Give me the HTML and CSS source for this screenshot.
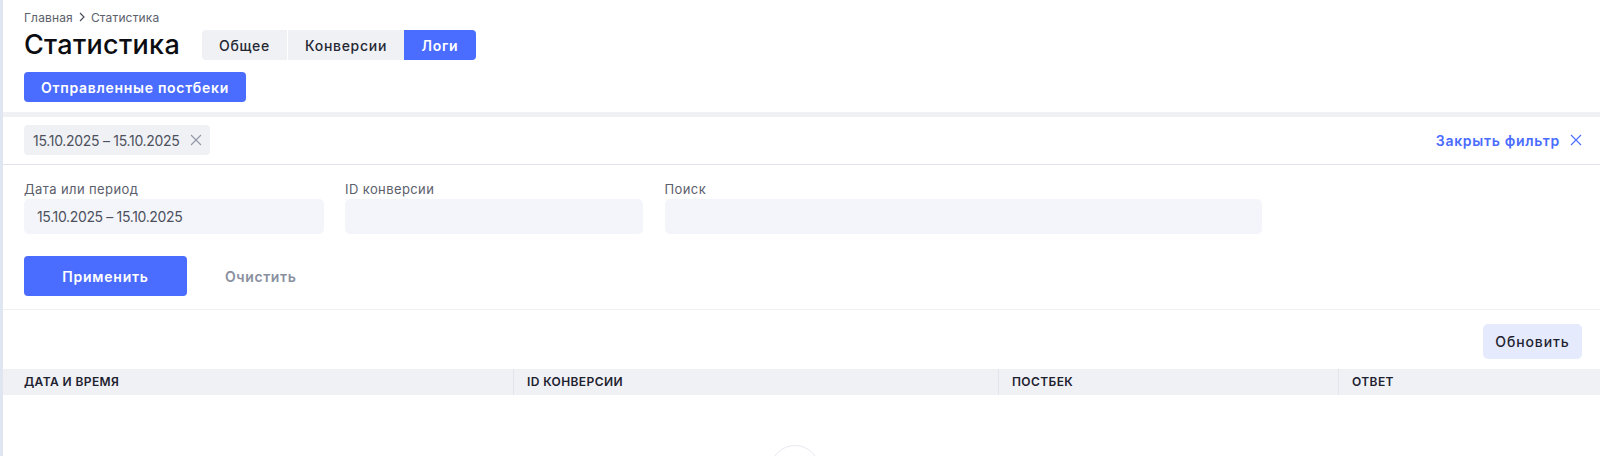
FILE: index.html
```html
<!DOCTYPE html>
<html lang="ru">
<head>
    <meta charset="UTF-8">
    <title>Статистика</title>
    <link rel="stylesheet" href="styles.css">
</head>
<body>
    <div class="page">
        <div class="page-head">
            <div class="breadcrumbs">
                <span>Главная</span>
                <svg class="crumb-arrow" width="6" height="10" viewBox="0 0 6 10"><path d="M1 1l4 4-4 4" fill="none" stroke="#4a4f5c" stroke-width="1.2"/></svg>
                <span>Статистика</span>
            </div>
            <div class="title-row">
                <h1 class="title">Статистика</h1>
                <div class="tabs">
                    <div class="tab">Общее</div>
                    <div class="tab">Конверсии</div>
                    <div class="tab active">Логи</div>
                </div>
            </div>
            <button class="sub-btn">Отправленные постбеки</button>
        </div>

        <div class="filter-bar">
            <div class="chip">
                <span>15.10.2025 – 15.10.2025</span>
                <svg width="12" height="12" viewBox="0 0 12 12"><path d="M1 1l10 10M11 1L1 11" stroke="#9298a6" stroke-width="1.1"/></svg>
            </div>
            <div class="filter-close">
                <span>Закрыть фильтр</span>
                <svg width="12" height="12" viewBox="0 0 12 12"><path d="M1 1l10 10M11 1L1 11" stroke="#4a6cff" stroke-width="1.1"/></svg>
            </div>
        </div>

        <div class="filter-form">
            <div class="fields">
                <div class="field field-date">
                    <label>Дата или период</label>
                    <div class="input">15.10.2025 – 15.10.2025</div>
                </div>
                <div class="field field-id">
                    <label>ID конверсии</label>
                    <div class="input"></div>
                </div>
                <div class="field field-search">
                    <label>Поиск</label>
                    <div class="input"></div>
                </div>
            </div>
            <div class="form-actions">
                <button class="apply-btn">Применить</button>
                <button class="clear-btn">Очистить</button>
            </div>
        </div>

        <div class="toolbar">
            <button class="refresh-btn">Обновить</button>
        </div>

        <div class="table-head">
            <div class="col col-date">ДАТА И ВРЕМЯ</div>
            <div class="col col-id">ID КОНВЕРСИИ</div>
            <div class="col col-postback">ПОСТБЕК</div>
            <div class="col col-answer">ОТВЕТ</div>
        </div>

        <div class="table-empty">
            <div class="empty-circle"></div>
        </div>
    </div>
</body>
</html>
```

FILE: styles.css
```css
* {
    margin: 0;
    padding: 0;
    box-sizing: border-box;
}

html, body {
    height: 456px;
    overflow: hidden;
}

body {
    font-family: Inter, 'Open Sans', sans-serif;
    background: #dfe6f1;
    color: #14161f;
}

.page {
    margin-left: 3px;
    height: 456px;
    background: white;
    overflow: hidden;
}

.page-head {
    height: 112px;
    padding: 10px 21px 0;
}

.breadcrumbs {
    display: flex;
    align-items: center;
    gap: 6px;
    height: 14px;
    font-size: 12px;
    letter-spacing: 0.15px;
    color: #5c606c;
}

.title-row {
    display: flex;
    align-items: center;
    height: 30px;
    margin-top: 6px;
}

.title {
    width: 178px;
    font-size: 27px;
    font-weight: 500;
    line-height: 30px;
    letter-spacing: 0.3px;
    color: #0c0d12;
}

.tabs {
    display: flex;
    height: 30px;
    gap: 1px;
}

.tab {
    display: flex;
    align-items: center;
    justify-content: center;
    width: 85px;
    background: #f0f1f5;
    font-size: 14px;
    font-weight: 500;
    letter-spacing: 0.7px;
    color: #252833;
}

.tab:first-child {
    border-radius: 4px 0 0 4px;
}

.tab:nth-child(2) {
    width: 116px;
}

.tab.active {
    width: 72px;
    margin-left: -1px;
    background: #4a6cff;
    color: white;
    font-weight: 600;
    border-radius: 0 4px 4px 0;
}

.sub-btn {
    display: block;
    width: 222px;
    height: 30px;
    margin-top: 12px;
    background: #4a6cff;
    border: none;
    border-radius: 4px;
    font-family: inherit;
    font-size: 14px;
    font-weight: 600;
    letter-spacing: 0.7px;
    color: white;
}

.filter-bar {
    display: flex;
    align-items: flex-start;
    justify-content: space-between;
    height: 53px;
    padding: 8px 21px 0;
    border-top: 5px solid #f0f1f5;
    border-bottom: 1px solid #e2e4ea;
}

.chip {
    display: flex;
    align-items: center;
    justify-content: space-between;
    width: 186px;
    height: 30px;
    padding: 0 8px 0 9px;
    background: #f0f1f5;
    border-radius: 4px;
    font-size: 14px;
    letter-spacing: -0.3px;
    color: #4d515d;
}

.filter-close {
    display: flex;
    align-items: center;
    gap: 10px;
    height: 30px;
    margin-right: -3px;
    font-size: 14px;
    font-weight: 600;
    letter-spacing: 0.7px;
    color: #4a6cff;
}

.filter-form {
    height: 145px;
    padding: 16px 21px 0;
    border-bottom: 1px solid #eff0f3;
}

.fields {
    display: flex;
    gap: 21.5px;
}

.field label {
    display: block;
    height: 18px;
    font-size: 13px;
    line-height: 16px;
    letter-spacing: 0.4px;
    color: #5c606c;
}

.field-date {
    width: 299.5px;
}

.field-id {
    width: 298px;
}

.field-search {
    width: 597px;
}

.input {
    height: 35px;
    padding: 0 13px;
    background: #f4f5fa;
    border-radius: 5px;
    font-size: 14px;
    line-height: 35px;
    letter-spacing: -0.35px;
    color: #4d515d;
}

.form-actions {
    display: flex;
    align-items: center;
    margin-top: 22px;
}

.apply-btn {
    width: 163px;
    height: 40px;
    background: #4a6cff;
    border: none;
    border-radius: 4px;
    font-family: inherit;
    font-size: 14px;
    font-weight: 600;
    letter-spacing: 0.75px;
    color: white;
}

.clear-btn {
    margin-left: 38px;
    background: none;
    border: none;
    font-family: inherit;
    font-size: 14px;
    font-weight: 600;
    letter-spacing: 0.6px;
    color: #8a8fa0;
}

.toolbar {
    display: flex;
    justify-content: flex-end;
    height: 59px;
    padding: 14px 18px 0 0;
}

.refresh-btn {
    width: 99px;
    height: 35px;
    background: #e5eafc;
    border: none;
    border-radius: 5px;
    font-family: inherit;
    font-size: 14px;
    font-weight: 500;
    letter-spacing: 0.9px;
    color: #1e2230;
}

.table-head {
    display: flex;
    height: 26px;
    background: #f0f1f5;
}

.col {
    padding-left: 21px;
    font-size: 12px;
    font-weight: 600;
    line-height: 26px;
    letter-spacing: 0.4px;
    color: #1e2230;
}

.col + .col {
    padding-left: 13px;
    border-left: 1px solid #e2e4ee;
}

.col-date {
    width: 510px;
}

.col-id {
    width: 485px;
}

.col-postback {
    width: 340px;
}

.col-answer {
    flex: 1;
}

.table-empty {
    display: flex;
    justify-content: center;
    padding-top: 50px;
}

.empty-circle {
    width: 50px;
    height: 50px;
    margin-left: -13px;
    border: 1px solid #e8e9f0;
    border-radius: 50%;
}
```
